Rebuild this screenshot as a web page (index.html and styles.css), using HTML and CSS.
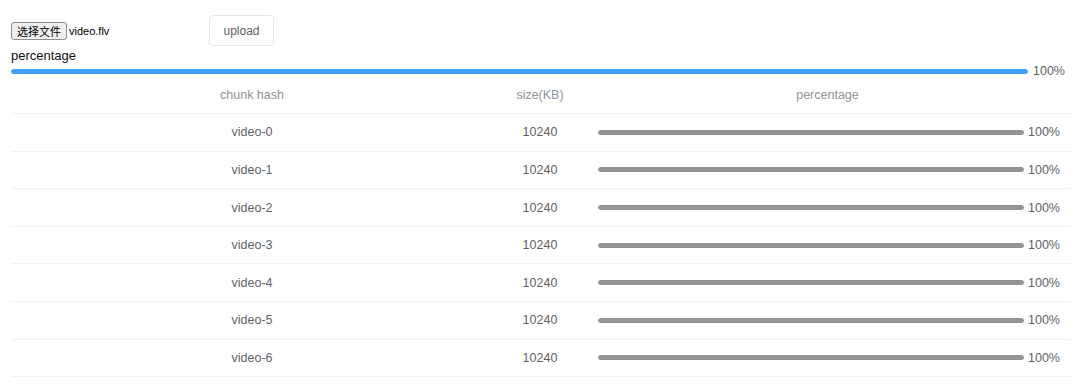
FILE: index.html
```html
<!DOCTYPE html>
<html lang="en">

<head>
    <meta charset="UTF-8">
    <meta name="viewport" content="width=device-width, initial-scale=1.0">
    <title>upload</title>
    <link rel="stylesheet" href="styles.css">
</head>

<body>
    <div class="page">
        <div class="toolbar">
            <label class="file-input">
                <span class="file-btn">选择文件</span>
                <span class="file-name">video.flv</span>
            </label>
            <button class="btn">upload</button>
        </div>
        <div class="label">percentage</div>
        <div class="progress progress-main">
            <div class="bar"><div class="inner" style="width: 100%"></div></div>
            <span class="text">100%</span>
        </div>
        <table class="chunks">
            <colgroup>
                <col class="col-hash">
                <col class="col-size">
                <col>
            </colgroup>
            <thead>
                <tr>
                    <th>chunk hash</th>
                    <th>size(KB)</th>
                    <th class="col-pct">percentage</th>
                </tr>
            </thead>
            <tbody id="rows"></tbody>
        </table>
    </div>
    <script>
        const chunks = [0, 1, 2, 3, 4, 5, 6].map(i => ({ hash: `video-${i}`, size: 10240, percentage: 100 }))
        const $rows = document.querySelector('#rows')
        $rows.innerHTML = chunks.map(c => `
            <tr>
                <td>${c.hash}</td>
                <td>${c.size}</td>
                <td class="col-pct">
                    <div class="progress progress-cell">
                        <div class="bar"><div class="inner" style="width: ${c.percentage}%"></div></div>
                        <span class="text">${c.percentage}%</span>
                    </div>
                </td>
            </tr>`).join('')
    </script>
</body>

</html>
```
FILE: styles.css
```css
body {
    margin: 0;
    background: #fff;
    font-family: "Liberation Sans", Arial, "Noto Sans CJK SC", sans-serif;
}

.page {
    padding: 15px 10px 0 11px;
}

.toolbar {
    display: flex;
    align-items: center;
    height: 31px;
}

.file-input {
    display: flex;
    align-items: center;
    width: 198px;
    font-size: 11px;
    color: #000;
}

.file-btn {
    box-sizing: border-box;
    height: 18px;
    line-height: 16px;
    padding: 0 5px;
    border: 1px solid #8f8f8f;
    border-radius: 3px;
    background: #efefef;
    font-family: "Noto Sans CJK SC", sans-serif;
    font-size: 11px;
    margin-right: 2px;
}

.btn {
    box-sizing: border-box;
    width: 65px;
    height: 31px;
    border: 1px solid #e4e7ed;
    border-radius: 4px;
    background: #fff;
    color: #606266;
    font-family: inherit;
    font-size: 12px;
    padding: 0;
}

.label {
    height: 20px;
    line-height: 20px;
    font-size: 13px;
    color: #111;
}

.progress {
    display: flex;
    align-items: center;
}

.progress .bar {
    flex: 1;
    height: 5px;
    border-radius: 3px;
    background: #ebeef5;
    overflow: hidden;
}

.progress .inner {
    height: 100%;
    border-radius: 3px;
}

.progress .text {
    font-size: 12.5px;
    color: #606266;
}

.progress-main {
    height: 10px;
}

.progress-main .inner {
    background: #409eff;
}

.progress-main .text {
    width: 37px;
    margin-left: 5px;
}

.progress-cell .inner {
    background: #939393;
}

.progress-cell .text {
    width: 29px;
    margin-left: 4px;
    text-align: left;
}

.chunks {
    width: 1059px;
    border-collapse: collapse;
    table-layout: fixed;
    font-size: 12.5px;
}

.chunks .col-hash {
    width: 482px;
}

.chunks .col-size {
    width: 94px;
}

.chunks th,
.chunks td {
    height: 37.6px;
    padding: 0;
    text-align: center;
    border-bottom: 1px solid #f0f1f4;
    box-sizing: border-box;
}

.chunks th {
    font-weight: normal;
    color: #909399;
}

.chunks td {
    color: #606266;
}

.chunks th.col-pct,
.chunks td.col-pct {
    padding: 0 13px 0 11px;
}
```
